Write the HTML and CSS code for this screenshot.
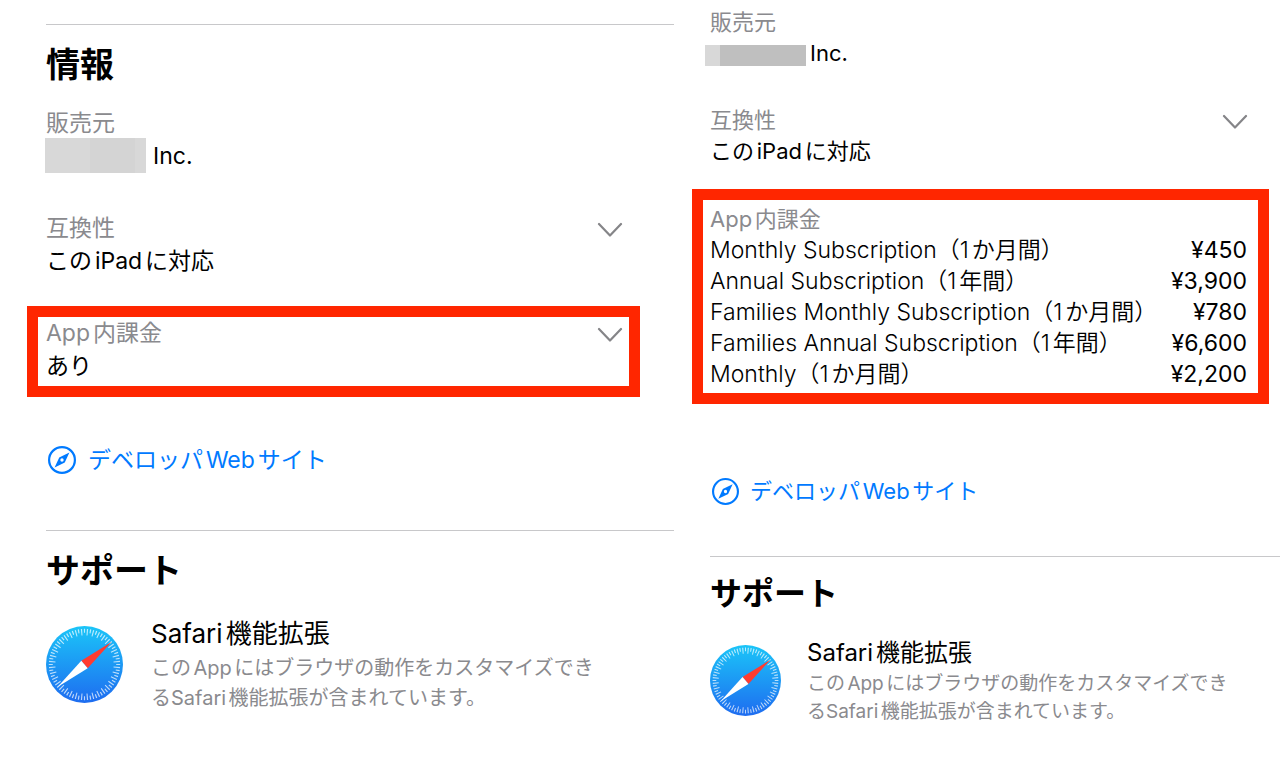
FILE: index.html
```
<!DOCTYPE html>
<html lang="ja">
<head>
    <meta charset="UTF-8">
    <meta name="viewport" content="width=device-width, initial-scale=1">
    <title>App内課金</title>
    <link rel="stylesheet" href="styles.css">
</head>
<body>
    <!-- shared shapes -->
    <svg class="defs" aria-hidden="true">
        <defs>
            <linearGradient id="safari-blue" x1="0" y1="0" x2="0" y2="1">
                <stop offset="0" stop-color="#1bc5f8"/>
                <stop offset="1" stop-color="#1e6cf0"/>
            </linearGradient>
            <symbol id="chevron" viewBox="0 0 26 16">
                <path d="M2 3l11 11.500L24 3" fill="none" stroke="#858588" stroke-width="2.200" stroke-linecap="round" stroke-linejoin="round"/>
            </symbol>
            <symbol id="compass" viewBox="0 0 28 28">
                <circle cx="14" cy="14" r="12.900" fill="none" stroke="currentColor" stroke-width="2.200"/>
                <path fill="currentColor" fill-rule="evenodd" d="M21.400 6.600L11.700 11.200Q11.200 11.500 11 12L6.600 21.400L16.300 16.800Q16.800 16.500 17 16ZM14 12.300a1.700 1.700 0 1 1 0 3.400a1.700 1.700 0 1 1 0-3.400Z"/>
            </symbol>
            <symbol id="safari" viewBox="0 0 77 77">
                <circle cx="38.500" cy="38.500" r="38.500" fill="url(#safari-blue)"/>
                <circle cx="38.500" cy="38.500" r="33.700" fill="none" stroke="#fff" stroke-opacity=".7" stroke-width="4" pathLength="360" stroke-dasharray="2 8" stroke-dashoffset="1"/>
                <circle cx="38.500" cy="38.500" r="32.400" fill="none" stroke="#fff" stroke-opacity=".7" stroke-width="6.500" pathLength="360" stroke-dasharray="2 8" stroke-dashoffset="6"/>
                <path fill="#ff3b30" d="M65.500 16L35.300 34.800L41.700 42.200Z"/>
                <path fill="#fff" d="M11.500 61L35.300 34.800L41.700 42.200Z"/>
            </symbol>
        </defs>
    </svg>

    <main class="screens">
        <section class="screen collapsed">
            <hr class="divider">
            <h2 class="heading">情報</h2>

            <div class="item">
                <p class="label">販売元</p>
                <p class="value seller"><span class="redacted"></span>Inc.</p>
            </div>

            <div class="item">
                <p class="label" id="compat-1">互換性</p>
                <p class="value">このiPadに対応</p>
                <button type="button" class="toggle" aria-labelledby="compat-1"><svg><use href="#chevron"/></svg></button>
            </div>

            <div class="item highlight">
                <p class="label" id="purchase-1">App内課金</p>
                <p class="value">あり</p>
                <button type="button" class="toggle" aria-labelledby="purchase-1"><svg><use href="#chevron"/></svg></button>
            </div>

            <a class="website" href="#"><svg><use href="#compass"/></svg>デベロッパWebサイト</a>

            <hr class="divider">
            <h2 class="heading">サポート</h2>
            <div class="support">
                <svg class="app-icon"><use href="#safari"/></svg>
                <div>
                    <h3 class="title">Safari機能拡張</h3>
                    <p class="description">このAppにはブラウザの動作をカスタマイズできるSafari機能拡張が含まれています。</p>
                </div>
            </div>
        </section>

        <section class="screen expanded">
            <div class="item">
                <p class="label">販売元</p>
                <p class="value seller"><span class="redacted"></span>Inc.</p>
            </div>

            <div class="item">
                <p class="label" id="compat-2">互換性</p>
                <p class="value">このiPadに対応</p>
                <button type="button" class="toggle" aria-labelledby="compat-2"><svg><use href="#chevron"/></svg></button>
            </div>

            <div class="item highlight">
                <p class="label" id="purchase-2">App内課金</p>
                <table class="prices" aria-labelledby="purchase-2">
                    <tr><td>Monthly Subscription（1か月間）</td><td>¥450</td></tr>
                    <tr><td>Annual Subscription（1年間）</td><td>¥3,900</td></tr>
                    <tr><td>Families Monthly Subscription（1か月間）</td><td>¥780</td></tr>
                    <tr><td>Families Annual Subscription（1年間）</td><td>¥6,600</td></tr>
                    <tr><td>Monthly（1か月間）</td><td>¥2,200</td></tr>
                </table>
            </div>

            <a class="website" href="#"><svg><use href="#compass"/></svg>デベロッパWebサイト</a>

            <hr class="divider">
            <h2 class="heading">サポート</h2>
            <div class="support">
                <svg class="app-icon"><use href="#safari"/></svg>
                <div>
                    <h3 class="title">Safari機能拡張</h3>
                    <p class="description">このAppにはブラウザの動作をカスタマイズできるSafari機能拡張が含まれています。</p>
                </div>
            </div>
        </section>
    </main>
</body>
</html>
```
FILE: styles.css
```
* {
    box-sizing: border-box;
}
body {
    margin: 0;
    background: #fff;
    color: #000;
    font-family: Inter, "Noto Sans CJK JP", sans-serif;
    font-weight: 390;
    text-autospace: normal;
}
h2, h3, p {
    margin: 0;
}
.defs {
    position: absolute;
    width: 0;
    height: 0;
}
.screens {
    display: grid;
    grid-template-columns: 674fr 606fr;
}
.screen {
    display: flex;
    flex-direction: column;
    min-width: 0;
}
.divider {
    width: 100%;
    height: 1px;
    margin: 0;
    border: 0;
    background: #c8c8ca;
}
.heading {
    line-height: 48px;
    font-weight: 700;
}

/* label / value rows */
.item {
    display: grid;
    grid-template-columns: 1fr auto;
}
.label {
    grid-column: 1;
    color: #8a8a8e;
}
.value {
    grid-column: 1;
}
.toggle {
    grid-column: 2;
    grid-row: 1;
    display: flex;
    align-items: center;
    padding: 0;
    border: 0;
    background: none;
    cursor: pointer;
}
.toggle svg {
    width: 26px;
    height: 16px;
}
.seller {
    display: flex;
    align-items: center;
}
.redacted {
    width: 101px;
}
.highlight {
    border: 11px solid #ff2600;
}
.prices {
    grid-column: 1 / -1;
    width: 100%;
    border-collapse: collapse;
    font-weight: 350;
}
.prices td {
    padding: 0;
    white-space: nowrap;
}
.prices td:last-child {
    text-align: right;
    font-weight: 390;
}

.website {
    display: flex;
    align-items: center;
    align-self: flex-start;
    line-height: 34px;
    color: #007aff;
    text-decoration: none;
}
.support {
    display: flex;
}
.app-icon {
    flex: none;
}
.title {
    font-weight: 390;
}
.description {
    color: #8a8a8e;
}

/* left screen */
.collapsed {
    padding: 24px 0 0 46px;
    font-size: 23px;
    line-height: 33px;
}
.collapsed .heading {
    margin-top: 16px;
    font-size: 34px;
}
.collapsed .item {
    margin: 0 51px 39px 0;
}
.collapsed .heading + .item {
    margin-top: 18px;
}
.collapsed .redacted {
    height: 35px;
    margin: -2px 7px 0 -1px;
    background: linear-gradient(90deg, #d8d8d8 45%, #d4d4d4 45% 89%, #d8d8d8 89%);
}
.collapsed .highlight {
    margin: -11px 34px 46px -19px;
    padding: 0 6px 3px 8px;
}
.collapsed .website {
    margin-bottom: 53px;
    gap: 12px;
}
.collapsed .website svg {
    width: 28px;
    height: 28px;
    margin-left: 2px;
}
.collapsed .support {
    margin: 20px 64px 0 0;
    gap: 28px;
}
.collapsed .app-icon {
    width: 77px;
    height: 77px;
    margin-top: 11px;
}
.collapsed .title {
    font-size: 26px;
    line-height: 38px;
}
.collapsed .description {
    font-size: 20px;
    line-height: 30px;
}

/* right screen */
.expanded {
    padding: 7px 0 0 36px;
    font-size: 22px;
    line-height: 31px;
}
.expanded .heading {
    margin-top: 13px;
    font-size: 32px;
}
.expanded .item {
    margin: 0 32px 36px 0;
}
.expanded .redacted {
    height: 21px;
    margin: 4px 4px 0 -5px;
    background: linear-gradient(90deg, #d8d8d8 15%, #bfbfbf 15%);
}
.expanded .highlight {
    margin: -14px 11px 70px -18px;
    padding: 4px 11px 3px 7px;
}
.expanded .prices {
    font-size: 23px;
}
.expanded .website {
    margin-bottom: 48px;
    gap: 11px;
}
.expanded .website svg {
    width: 27px;
    height: 27px;
    margin-left: 2px;
}
.expanded .support {
    margin: 17px 48px 0 0;
    gap: 26px;
}
.expanded .app-icon {
    width: 71px;
    height: 71px;
    margin-top: 10px;
}
.expanded .title {
    font-size: 24px;
    line-height: 35px;
}
.expanded .description {
    font-size: 19px;
    line-height: 28px;
}

/* one screen under the other on narrow windows */
@media (max-width: 900px) {
    .screens {
        grid-template-columns: 1fr;
    }
}
```
